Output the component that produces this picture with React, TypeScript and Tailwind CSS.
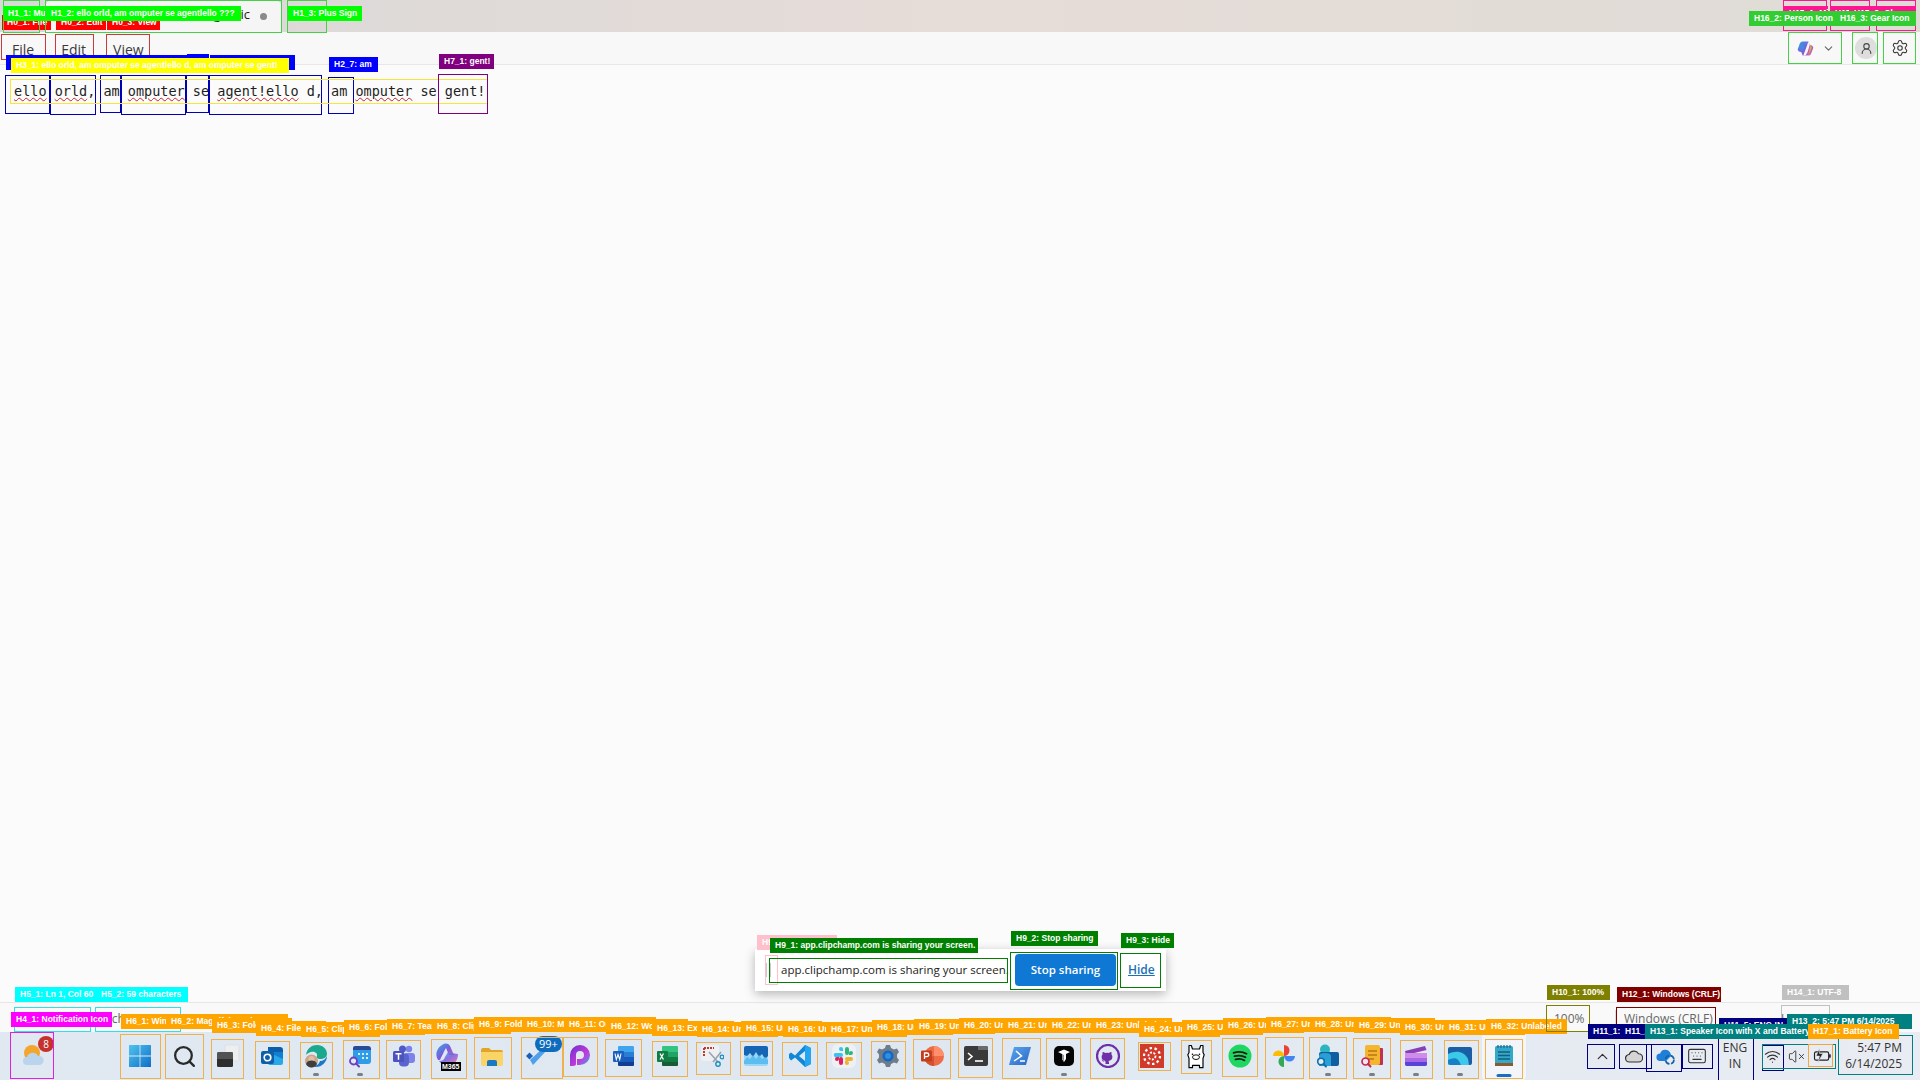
import type { ReactNode } from "react";
import { ChevronDown, ChevronUp, Settings, UserRound, Wifi, VolumeX, Keyboard, Search } from "lucide-react";

type Note =
  | { k: "box"; x: number; y: number; w: number; h: number; c: string }
  | { k: "tag"; x: number; y: number; t: string; c: string; w?: number };

const box = (x: number, y: number, r: number, b: number, c: string): Note => ({ k: "box", x, y, w: r - x, h: b - y, c });
const tag = (x: number, y: number, t: string, c: string, w?: number): Note => ({ k: "tag", x, y, t, c, w });

const ORANGE = "#ffa500";
const ORANGE_BOX = "#f2b04a";
const NAVY = "#000080";
const BLUE = "#0000ff";
const BLUE_BOX = "#0000b4";
const TEAL = "#008080";
const GREEN = "#00ff00";
const GREEN_BOX = "#45d045";
const LIME = "#32cd32";
const DGREEN = "#008000";
const PINK = "#ff1493";

// left, top, right, bottom of each taskbar box + where its tag sits
const taskBoxes: [number, number, number, number, number, number, string, number?][] = [
  [120, 1034, 161, 1079, 121, 1014, "Windows Icon"],
  [165, 1034, 204, 1079, 166, 1014, "Magnifying Glass Icon", 122],
  [211, 1039, 244, 1079, 212, 1018, "Folder Icon", 80],
  [255, 1041, 290, 1079, 256, 1021, "File Icon"],
  [300, 1042, 333, 1079, 301, 1022, "Clipchamp"],
  [343, 1040, 380, 1079, 344, 1020, "Folder Icon"],
  [386, 1040, 421, 1079, 387, 1019, "Teams Icon"],
  [431, 1039, 467, 1079, 432, 1019, "Clipchamp"],
  [474, 1037, 512, 1079, 474, 1017, "Folder Icon"],
  [521, 1037, 563, 1079, 522, 1017, "Messages"],
  [563, 1037, 598, 1077, 564, 1017, "Outlook Icon"],
  [605, 1039, 642, 1077, 606, 1019, "Word Icon"],
  [652, 1041, 688, 1077, 652, 1021, "Excel Icon"],
  [696, 1042, 731, 1075, 697, 1022, "Unlabeled"],
  [740, 1041, 773, 1076, 741, 1021, "Unlabeled"],
  [782, 1042, 818, 1076, 783, 1022, "Unlabeled"],
  [826, 1042, 862, 1079, 826, 1022, "Unlabeled"],
  [871, 1041, 906, 1079, 872, 1020, "Unlabeled"],
  [913, 1039, 951, 1079, 914, 1019, "Unlabeled"],
  [958, 1038, 993, 1078, 959, 1018, "Unlabeled"],
  [1002, 1038, 1041, 1079, 1003, 1018, "Unlabeled"],
  [1046, 1038, 1081, 1079, 1047, 1018, "Unlabeled"],
  [1090, 1038, 1125, 1079, 1091, 1018, "Unlabeled"],
  [1138, 1042, 1171, 1071, 1139, 1022, "Unlabeled"],
  [1181, 1040, 1212, 1074, 1182, 1020, "Unlabeled"],
  [1222, 1038, 1258, 1077, 1223, 1018, "Unlabeled"],
  [1265, 1037, 1304, 1079, 1266, 1017, "Unlabeled"],
  [1309, 1037, 1347, 1079, 1310, 1017, "Unlabeled"],
  [1353, 1038, 1391, 1079, 1354, 1018, "Unlabeled"],
  [1400, 1040, 1433, 1079, 1400, 1020, "Unlabeled"],
  [1444, 1040, 1479, 1079, 1444, 1020, "Unlabeled"],
  [1485, 1039, 1523, 1079, 1486, 1019, "Unlabeled"],
];

const notes: Note[] = [
  box(1, 34, 46, 60, "#c93a3a"),
  box(55, 34, 94, 60, "#c93a3a"),
  box(106, 34, 150, 60, "#c93a3a"),
  tag(2, 15, "H0_1: File", "#ff0000", 49),
  tag(56, 15, "H0_2: Edit", "#ff0000", 50),
  tag(107, 15, "H0_3: View", "#ff0000", 53),
  box(3, 0, 40, 33, GREEN_BOX),
  box(45, 0, 282, 33, GREEN_BOX),
  box(287, 0, 327, 33, GREEN_BOX),
  tag(3, 6, "H1_1: Music Note", GREEN, 42),
  tag(46, 6, "H1_2: ello orld, am omputer se agentlello ???", GREEN, 195),
  tag(288, 6, "H1_3: Plus Sign", GREEN, 74),
  box(5, 75, 50, 114, BLUE_BOX),
  box(50, 75, 96, 115, BLUE_BOX),
  box(100, 75, 121, 113, BLUE_BOX),
  box(121, 75, 186, 115, BLUE_BOX),
  box(186, 75, 209, 113, BLUE_BOX),
  box(209, 75, 322, 115, BLUE_BOX),
  box(328, 77, 354, 114, BLUE_BOX),
  tag(6, 55, "H2_1: ello", BLUE, 44),
  tag(50, 55, "H2_2: orld,", BLUE, 50),
  tag(100, 55, "H2_3: am", BLUE, 21),
  tag(121, 55, "H2_4: omputer", BLUE, 66),
  tag(187, 54, "H2_5: se", BLUE, 22),
  tag(210, 55, "H2_6: agent!ello", BLUE, 85),
  tag(329, 57, "H2_7: am", BLUE, 49),
  box(10, 79, 488, 104, "#f5e63c"),
  tag(11, 58, "H3_1: ello orld, am omputer se agentlello d, am omputer se gent!", "#ffff00", 278),
  box(438, 74, 488, 114, "#800080"),
  tag(439, 54, "H7_1: gent!", "#800080", 55),
  box(1783, 0, 1827, 31, PINK),
  box(1830, 0, 1870, 31, PINK),
  box(1876, 0, 1916, 31, PINK),
  tag(1784, 6, "H15_1: Minimize", PINK, 44),
  tag(1830, 6, "H15_2: Maximize", PINK, 40),
  tag(1849, 6, "H15_3: Close", PINK, 67),
  box(1788, 32, 1842, 64, GREEN_BOX),
  box(1852, 32, 1878, 64, GREEN_BOX),
  box(1883, 32, 1916, 64, GREEN_BOX),
  tag(1749, 11, "H16_2: Person Icon", LIME, 86),
  tag(1835, 11, "H16_3: Gear Icon", LIME, 81),
  box(14, 1007, 91, 1032, "#30e0e8"),
  box(95, 1007, 181, 1032, "#30e0e8"),
  tag(15, 987, "H5_1: Ln 1, Col 60", "#00ffff", 81),
  tag(96, 987, "H5_2: 59 characters", "#00ffff", 92),
  box(10, 1032, 54, 1079, "#e020e0"),
  tag(11, 1012, "H4_1: Notification Icon", "#ff00ff", 101),
  ...taskBoxes.map(([l, t, r, b]) => box(l, t, r, b, ORANGE_BOX)),
  ...taskBoxes.map(([, , , , x, y, t, w], i) => tag(x, y, `H6_${i + 1}: ${t}`, ORANGE, w)),
  box(1546, 1005, 1590, 1032, "#808000"),
  tag(1547, 985, "H10_1: 100%", "#808000", 63),
  box(1616, 1007, 1716, 1032, "#800000"),
  tag(1617, 987, "H12_1: Windows (CRLF)", "#800000", 104),
  box(1781, 1005, 1830, 1032, "#c0c0c0"),
  tag(1782, 985, "H14_1: UTF-8", "#c0c0c0", 67),
  box(1587, 1044, 1615, 1069, NAVY),
  box(1619, 1044, 1652, 1069, NAVY),
  box(1646, 1044, 1682, 1072, NAVY),
  box(1682, 1044, 1713, 1069, NAVY),
  box(1718, 1036, 1754, 1084, NAVY),
  box(1762, 1045, 1784, 1071, NAVY),
  tag(1588, 1024, "H11_1: Chevron", NAVY, 32),
  tag(1620, 1024, "H11_2: Cloud", NAVY, 32),
  tag(1719, 1018, "H11_5: ENG IN", NAVY, 72),
  box(1762, 1044, 1836, 1069, TEAL),
  box(1838, 1035, 1913, 1075, TEAL),
  tag(1787, 1014, "H13_2: 5:47 PM 6/14/2025", TEAL, 125),
  tag(1645, 1024, "H13_1: Speaker Icon with X and Battery", TEAL, 165),
  box(1808, 1044, 1833, 1067, "#f2a63c"),
  tag(1808, 1024, "H17_1: Battery Icon", ORANGE, 91),
  box(765, 955, 778, 985, "#ffc0cb"),
  tag(757, 935, "H9_0: Pause", "#ffc0cb", 80),
  box(769, 958, 1008, 983, DGREEN),
  box(1010, 952, 1118, 990, DGREEN),
  box(1120, 953, 1161, 988, DGREEN),
  tag(770, 938, "H9_1: app.clipchamp.com is sharing your screen.", DGREEN, 208),
  tag(1011, 931, "H9_2: Stop sharing", DGREEN, 87),
  tag(1121, 933, "H9_3: Hide", DGREEN, 53),
];

function Annotations() {
  return (
    <div className="absolute inset-0 pointer-events-none overflow-hidden z-20">
      {notes.map((n, i) =>
        n.k === "box" ? (
          <div
            key={i}
            className="absolute border-[1.5px]"
            style={{ left: n.x, top: n.y, width: n.w, height: n.h, borderColor: n.c }}
          />
        ) : (
          <div
            key={i}
            className="absolute h-[15px] overflow-hidden whitespace-nowrap px-[5px] text-[8.5px] font-bold leading-[15px] text-white font-['Liberation_Sans',sans-serif]"
            style={{ left: n.x, top: n.y, width: n.w, backgroundColor: n.c }}
          >
            {n.t}
          </div>
        ),
      )}
    </div>
  );
}

function Svg({ children, size = 24 }: { children: ReactNode; size?: number }) {
  return (
    <svg width={size} height={size} viewBox="0 0 24 24" aria-hidden="true">
      {children}
    </svg>
  );
}

function Dot({ blue }: { blue?: boolean }) {
  return blue ? (
    <span className="absolute bottom-[3px] left-1/2 h-[3px] w-[15px] -translate-x-1/2 rounded-full bg-[#1a6fc0]" />
  ) : (
    <span className="absolute bottom-[4px] left-1/2 h-[3px] w-[6px] -translate-x-1/2 rounded-full bg-[#7a7f85]" />
  );
}

function Slot({ children, dot, active }: { children: ReactNode; dot?: "grey" | "blue"; active?: boolean }) {
  return (
    <div className={`relative flex h-[48px] w-[44px] items-center justify-center ${active ? "rounded bg-[#f3f5f8]" : ""}`}>
      {children}
      {dot && <Dot blue={dot === "blue"} />}
    </div>
  );
}

const taskIcons: { el: ReactNode; dot?: "grey" | "blue"; active?: boolean }[] = [
  {
    el: (
      <Svg>
        <defs>
          <linearGradient id="win" x1="0" y1="0" x2="1" y2="1">
            <stop offset="0" stopColor="#4fc3f0" />
            <stop offset="1" stopColor="#0f6fc6" />
          </linearGradient>
        </defs>
        <path d="M1 1h10.6v10.6H1zM12.4 1H23v10.6H12.4zM1 12.4h10.6V23H1zM12.4 12.4H23V23H12.4z" fill="url(#win)" />
      </Svg>
    ),
  },
  { el: <Search size={25} strokeWidth={2.2} color="#2a2a2a" /> },
  {
    el: (
      <Svg>
        <rect x="9" y="1" width="14" height="16" rx="1.5" fill="#eceef0" stroke="#dde0e3" />
        <rect x="1" y="8" width="16" height="15" rx="1.5" fill="#2e2e2e" />
        <path d="M1 9.5A1.5 1.5 0 0 1 2.5 8H17v7H1z" fill="#6a6a6a" opacity="0.6" />
      </Svg>
    ),
  },
  {
    el: (
      <Svg>
        <path d="M8 3h12a3 3 0 0 1 3 3v2H8z" fill="#0d5ea8" />
        <path d="M8 8h15v11a2 2 0 0 1-2 2H10a2 2 0 0 1-2-2z" fill="#28a8ea" />
        <path d="M8 8l15 7v-7z" fill="#0f7fd0" />
        <rect x="1" y="7" width="13" height="13" rx="2" fill="#0f5fa8" />
        <circle cx="7.5" cy="13.5" r="3.3" fill="none" stroke="#fff" strokeWidth="1.6" />
      </Svg>
    ),
  },
  {
    el: (
      <Svg>
        <path d="M2 11C3 4 8 1 13 1c6 0 10 4 10 9 0 3-3 5-7 5-2 0-4-1-3-3 1-3-3-5-6-4-2 .6-4 1.5-5 3z" fill="#1aa88f" />
        <path d="M23 12c0 6-5 11-11 11-2 0-3-.4-4-1 5 0 7-2 8-5 3 0 6-2 7-5z" fill="#1d76c8" />
        <circle cx="7.5" cy="17" r="6.5" fill="#c9a58c" />
        <circle cx="7.5" cy="15" r="3" fill="#e3bea3" />
        <path d="M2 20c1-3 3-3.5 5.5-3.5S12 17 13 20c-1.2 2-3 3.5-5.5 3.5S3 22 2 20z" fill="#3d3d3d" />
      </Svg>
    ),
    dot: "grey",
  },
  {
    el: (
      <Svg>
        <path d="M7 2h13a3 3 0 0 1 3 3v1H5V4a2 2 0 0 1 2-2z" fill="#2a4a98" />
        <path d="M5 6h18v11a3 3 0 0 1-3 3H8a3 3 0 0 1-3-3z" fill="#2f9ce8" />
        <g fill="#fff">
          <circle cx="11" cy="10" r="1.1" />
          <circle cx="15" cy="10" r="1.1" />
          <circle cx="19" cy="10" r="1.1" />
          <circle cx="15" cy="14" r="1.1" />
          <circle cx="19" cy="14" r="1.1" />
        </g>
        <circle cx="5.5" cy="17" r="3.5" fill="#dfe6f2" stroke="#6b3fc0" strokeWidth="1.8" />
        <path d="M8 19.5l3 3" stroke="#6b3fc0" strokeWidth="2" strokeLinecap="round" />
      </Svg>
    ),
    dot: "grey",
  },
  {
    el: (
      <Svg>
        <circle cx="17" cy="5" r="3.2" fill="#7b83eb" />
        <rect x="12" y="9" width="11" height="10" rx="3" fill="#7b83eb" />
        <circle cx="10.5" cy="5" r="3.5" fill="#5059c9" />
        <rect x="7" y="9.5" width="10" height="13" rx="4" fill="#5b63cf" />
        <rect x="1" y="7" width="11" height="11" rx="1.5" fill="#4b53bc" />
        <path d="M3.5 9.7h6M6.5 9.7v6" stroke="#fff" strokeWidth="1.5" />
      </Svg>
    ),
  },
  {
    el: (
      <div className="relative h-[28px] w-[26px]">
        <Svg size={24}>
          <defs>
            <linearGradient id="m365" x1="0" y1="0" x2="1" y2="1">
              <stop offset="0" stopColor="#2bb3d9" />
              <stop offset="0.5" stopColor="#7a5ae0" />
              <stop offset="1" stopColor="#e56aa0" />
            </linearGradient>
          </defs>
          <path d="M7 3c3-2 6-2 8 1l4 9h-5L11 6C9 9 7 14 5 18H3C1 15 1 11 2 9c1-3 3-5 5-6z" fill="url(#m365)" />
          <path d="M10 22c-3 0-5-1-6-3 3 0 5-1 6-4l3-5 3 1 7 1c0 5-2 10-8 10z" fill="url(#m365)" opacity="0.85" />
        </Svg>
        <span className="absolute bottom-[-1px] left-[6px] bg-black px-[1px] text-[7px] font-bold leading-[9px] text-white font-['Liberation_Sans',sans-serif]">
          M365
        </span>
      </div>
    ),
  },
  {
    el: (
      <Svg>
        <path d="M1 6a2 2 0 0 1 2-2h6l2 2h10a2 2 0 0 1 2 2v2H1z" fill="#e2a52a" />
        <path d="M1 8h22v12a2 2 0 0 1-2 2H3a2 2 0 0 1-2-2z" fill="#fbd468" />
        <path d="M7 22v-4a2 2 0 0 1 2-2h6a2 2 0 0 1 2 2v4z" fill="#1b78c4" />
      </Svg>
    ),
  },
  {
    el: (
      <div className="relative">
        <Svg size={24}>
          <path d="M2 12l3.5-3.5 3.5 3.5-3.5 3.5z" fill="#1a5fb8" />
          <path d="M6 16L19 4l3 3L10 20l-1 1z" fill="#4f9fea" />
        </Svg>
        <span className="absolute left-[11px] top-[-8px] rounded-full bg-[#0f6cbd] px-[4px] text-[11px] leading-[16px] text-white font-['Open_Sans',sans-serif]">
          99+
        </span>
      </div>
    ),
  },
  {
    el: (
      <Svg>
        <defs>
          <linearGradient id="pp" x1="0" y1="0" x2="1" y2="1">
            <stop offset="0" stopColor="#6a2fd0" />
            <stop offset="0.6" stopColor="#c23bd8" />
            <stop offset="1" stopColor="#3aa8e8" />
          </linearGradient>
        </defs>
        <path d="M2 22V11A10 10 0 1 1 12 21H9v-6h3a4 4 0 1 0-4-4v9c0 1-1 2-3 2z" fill="url(#pp)" />
      </Svg>
    ),
  },
  {
    el: (
      <Svg>
        <path d="M7 2h14a2 2 0 0 1 1 1v5H6V3a1 1 0 0 1 1-1z" fill="#41a5ee" />
        <rect x="6" y="8" width="16" height="5" fill="#2b7cd3" />
        <rect x="6" y="13" width="16" height="5" fill="#185abd" />
        <path d="M6 18h16v3a1 1 0 0 1-1 1H7a1 1 0 0 1-1-1z" fill="#103f91" />
        <rect x="1" y="7" width="11" height="11" rx="1" fill="#1a5fc0" />
        <path d="M3 9.5l1.3 6 1.7-5 1.7 5 1.3-6" fill="none" stroke="#fff" strokeWidth="1.1" />
      </Svg>
    ),
  },
  {
    el: (
      <Svg>
        <path d="M7 2h14a1 1 0 0 1 1 1v5H6V3a1 1 0 0 1 1-1z" fill="#33c481" />
        <rect x="6" y="8" width="16" height="5" fill="#21a366" />
        <rect x="6" y="13" width="16" height="5" fill="#107c41" />
        <path d="M6 18h16v3a1 1 0 0 1-1 1H7a1 1 0 0 1-1-1z" fill="#185c37" />
        <rect x="1" y="7" width="11" height="11" rx="1" fill="#107c41" />
        <path d="M4 9.5l3.5 6M7.5 9.5l-3.5 6" stroke="#fff" strokeWidth="1.3" />
      </Svg>
    ),
  },
  {
    el: (
      <Svg>
        <rect x="1" y="1" width="18" height="16" rx="3" fill="#eef0f3" />
        <path d="M4 4h10M4 4v8" stroke="#c0392b" strokeWidth="2" strokeDasharray="2 1" />
        <path d="M9 8l9 10M21 8l-8 10" stroke="#9aa3ad" strokeWidth="1.6" />
        <circle cx="18" cy="20" r="2.2" fill="none" stroke="#1c8fbf" strokeWidth="1.4" />
        <circle cx="22" cy="13" r="1.8" fill="none" stroke="#1c8fbf" strokeWidth="1.3" />
      </Svg>
    ),
  },
  {
    el: (
      <Svg>
        <rect x="0" y="2" width="24" height="20" rx="2" fill="#9bd7f5" />
        <path d="M0 4a2 2 0 0 1 2-2h20a2 2 0 0 1 2 2v8l-3 3-3-5-3 3-3-5-3 5-3-4-3 3-3-1z" fill="#1565b4" />
        <path d="M0 17l3-4 3 2 3-4 3 4 3-4 3 4 3-2 3 3v4H0z" fill="#5dbdf0" />
      </Svg>
    ),
  },
  {
    el: (
      <Svg>
        <path d="M17 1l6 3v16l-6 3-10-9.5-4 3L1 14v-4l2-1.5 4 3zm0 6l-6 5 6 5z" fill="#1187d8" />
        <path d="M17 1l6 3v16l-6 3z" fill="#25a4ef" />
      </Svg>
    ),
  },
  {
    el: (
      <Svg>
        <rect x="0" y="0" width="24" height="24" rx="6" fill="#eef0f4" />
        <path d="M9 3a2 2 0 0 1 2 2v2H9a2 2 0 0 1 0-4zM3 9h6a2 2 0 0 1 0 4H5a2 2 0 0 1-2-4z" fill="#36c5f0" />
        <path d="M21 9a2 2 0 0 1-2 2h-2V9a2 2 0 0 1 4 0zM15 3a2 2 0 0 1 2 2v4a2 2 0 0 1-4 0V5a2 2 0 0 1 2-2z" fill="#2eb67d" />
        <path d="M15 21a2 2 0 0 1-2-2v-2h2a2 2 0 0 1 0 4zM21 15a2 2 0 0 1-2 2h-4a2 2 0 0 1 0-4h4a2 2 0 0 1 2 2z" fill="#ecb22e" />
        <path d="M3 15a2 2 0 0 1 2-2h2v2a2 2 0 0 1-4 0zM9 21a2 2 0 0 1-2-2v-4a2 2 0 0 1 4 0v4a2 2 0 0 1-2 2z" fill="#e01e5a" />
      </Svg>
    ),
  },
  {
    el: (
      <Svg>
        <path d="M10 1h4l1 3 3 1.5 3-1 2 3.5-2 2.5v3l2 2.5-2 3.5-3-1L15 20l-1 3h-4l-1-3-3-1.5-3 1-2-3.5 2-2.5v-3L1 8l2-3.5 3 1L9 4z" fill="#6f7c8a" />
        <circle cx="12" cy="12" r="5.5" fill="#1268c4" />
        <circle cx="12" cy="12" r="3" fill="#2f8fe0" />
      </Svg>
    ),
  },
  {
    el: (
      <Svg>
        <circle cx="14" cy="12" r="10" fill="#ed6c47" />
        <path d="M14 2A10 10 0 0 1 24 12H14z" fill="#ff8f6b" />
        <path d="M14 12v10A10 10 0 0 1 4 14z" fill="#d35230" />
        <rect x="1" y="6.5" width="11" height="11" rx="1" fill="#c43e1c" />
        <path d="M4.5 15V9H7a1.8 1.8 0 0 1 0 3.6H4.5" fill="none" stroke="#fff" strokeWidth="1.3" />
      </Svg>
    ),
  },
  {
    el: (
      <Svg>
        <rect x="0" y="2" width="24" height="20" rx="2" fill="#3a3a3a" />
        <path d="M14 2h8a2 2 0 0 1 2 2v2H14z" fill="#6b6b6b" />
        <path d="M4 9l4 3.5L4 16" fill="none" stroke="#fff" strokeWidth="1.6" />
        <path d="M11 17h8" stroke="#fff" strokeWidth="1.6" />
      </Svg>
    ),
  },
  {
    el: (
      <Svg>
        <defs>
          <linearGradient id="psh" x1="0" y1="0" x2="1" y2="1">
            <stop offset="0" stopColor="#5ba7f0" />
            <stop offset="1" stopColor="#2a66c4" />
          </linearGradient>
        </defs>
        <path d="M6 3h17l-5 18H1z" fill="url(#psh)" />
        <path d="M8 7l5.5 5L6 17M12 17h5" fill="none" stroke="#fff" strokeWidth="1.5" />
      </Svg>
    ),
  },
  {
    el: (
      <Svg>
        <rect x="2" y="2" width="20" height="20" rx="5" fill="#050505" />
        <path d="M6 8l6-2.5L18 8l-4 2v5l-2 3-2-3v-5z" fill="#fff" />
        <path d="M12 11v7l-2-3v-5z" fill="#9a9a9a" />
      </Svg>
    ),
    dot: "grey",
  },
  {
    el: (
      <Svg>
        <circle cx="12" cy="12" r="11" fill="none" stroke="#6f2fa8" strokeWidth="2.2" />
        <path d="M9.5 20v-2.5c-3 .6-3.6-1.2-4-2 1 .2 1.7 1 2.2 1.5.8.8 1.8.3 1.9 0-2.5-.4-4-1.8-4-4.3 0-1 .4-1.8 1-2.5-.2-.7-.2-1.5.1-2.2 1 0 1.8.5 2.4 1a7 7 0 0 1 3.8 0c.6-.5 1.4-1 2.4-1 .3.7.3 1.5.1 2.2.6.7 1 1.5 1 2.5 0 2.5-1.5 3.9-4 4.3.5.5.6 1 .6 1.6V20z" fill="#6f2fa8" />
      </Svg>
    ),
  },
  {
    el: (
      <Svg>
        <rect x="0" y="0" width="24" height="24" fill="#d03a2b" />
        <circle cx="12" cy="12" r="3.5" fill="none" stroke="#fff" strokeWidth="1.8" strokeDasharray="2 1.5" />
        <circle cx="12" cy="12" r="8" fill="none" stroke="#fff" strokeWidth="2.2" strokeDasharray="2.5 2.5" />
      </Svg>
    ),
  },
  {
    el: (
      <Svg size={28}>
        <path d="M6 22V14L5 11l1-2V3h2l1 3h6l1-3h2v6l1 2-1 3v8h-3v-2H9v2z" fill="#fff" stroke="#000" strokeWidth="1" strokeLinejoin="round" />
        <ellipse cx="12" cy="13" rx="3" ry="2" fill="none" stroke="#000" strokeWidth="0.8" />
        <circle cx="9" cy="10.5" r="0.7" />
        <circle cx="15" cy="10.5" r="0.7" />
      </Svg>
    ),
  },
  {
    el: (
      <Svg>
        <circle cx="12" cy="12" r="11.5" fill="#1ed760" />
        <path d="M5.5 8.8c4.5-1.3 9.5-1 13 1M6.5 12.2c4-1 8-.7 11 1.1M7.5 15.4c3-.8 6.5-.5 9 1" fill="none" stroke="#1a1a1a" strokeWidth="1.8" strokeLinecap="round" />
      </Svg>
    ),
  },
  {
    el: (
      <Svg>
        <path d="M1 12a5.5 5.5 0 0 1 11 0z" fill="#fbbc04" />
        <path d="M12 1a5.5 5.5 0 0 1 0 11z" fill="#ea4335" />
        <path d="M23 12a5.5 5.5 0 0 1-11 0z" fill="#4285f4" />
        <path d="M12 23a5.5 5.5 0 0 1 0-11z" fill="#34a853" />
      </Svg>
    ),
  },
  {
    el: (
      <Svg>
        <circle cx="9" cy="5.5" r="5" fill="#2cb5c0" />
        <rect x="3" y="8" width="20" height="14" rx="2" fill="#0f5fa0" />
        <path d="M3 12c0-2 2-3 6-3s6 1 6 3v10H5a2 2 0 0 1-2-2z" fill="#2a9fd6" />
        <circle cx="5" cy="17.5" r="3.3" fill="#e4eef6" stroke="#0f6fa8" strokeWidth="1.6" />
        <path d="M7.5 20l2.5 2.5" stroke="#0f6fa8" strokeWidth="2" strokeLinecap="round" />
      </Svg>
    ),
    dot: "grey",
  },
  {
    el: (
      <Svg>
        <rect x="16" y="4" width="7" height="17" rx="1" fill="#c0334d" />
        <rect x="5" y="1" width="15" height="20" rx="2" fill="#f5b52e" />
        <path d="M8 7h9M8 11h9M8 15h6" stroke="#b87514" strokeWidth="1.3" />
        <circle cx="5.5" cy="17.5" r="3.5" fill="#f7e3e8" stroke="#c0285a" strokeWidth="1.7" />
        <path d="M8 20l2.5 2.5" stroke="#c0285a" strokeWidth="2" strokeLinecap="round" />
      </Svg>
    ),
    dot: "grey",
  },
  {
    el: (
      <Svg>
        <path d="M1 7l20-5 1.5 4L2 11z" fill="#8a3fb5" />
        <rect x="1" y="9" width="22" height="13" rx="2" fill="#a868e8" />
        <path d="M1 9h22v5H1z" fill="#d08ce8" />
        <path d="M1 18h22v2a2 2 0 0 1-2 2H3a2 2 0 0 1-2-2z" fill="#5a44d8" />
      </Svg>
    ),
    dot: "grey",
  },
  {
    el: (
      <Svg>
        <rect x="0" y="3" width="24" height="18" rx="2" fill="#1a5fa6" />
        <path d="M0 10c8-4 16-3 20 5l1 6H3a3 3 0 0 1-3-3z" fill="#3cc8e8" />
        <path d="M0 16c6-3 10-3 13 5H3a3 3 0 0 1-3-3z" fill="#1580c4" />
      </Svg>
    ),
    dot: "grey",
  },
  {
    el: (
      <Svg>
        <rect x="3" y="2" width="18" height="18" rx="1.5" fill="#35a7c8" />
        <rect x="3" y="19" width="18" height="3" fill="#8a5a30" />
        <path d="M6 1v3M9 1v3M12 1v3M15 1v3M18 1v3" stroke="#166a8a" strokeWidth="1.2" />
        <path d="M6 8h12M6 11.5h12M6 15h12" stroke="#12607e" strokeWidth="1.4" />
      </Svg>
    ),
    dot: "blue",
    active: true,
  },
];

function Copilot() {
  return (
    <Svg size={17}>
      <defs>
        <linearGradient id="cop" x1="0" y1="0" x2="1" y2="1">
          <stop offset="0" stopColor="#2aa9d8" />
          <stop offset="0.5" stopColor="#7b5ae0" />
          <stop offset="1" stopColor="#e56a9f" />
        </linearGradient>
      </defs>
      <path d="M8 2h8l2 5c3 0 5 2 5 4l-3 8c-1 2-2 3-4 3H8l-2-5c-3 0-5-2-5-4l3-8c1-2 2-3 4-3z" fill="url(#cop)" />
      <path d="M16 2l2 5-3 10-3 5H9l5-14z" fill="#f5f5f5" />
      <path d="M4 6l3 1 4 3-3 6-3-1z" fill="#2f9be0" opacity="0.6" />
      <path d="M19 6l2 5-5 11 1-6z" fill="#f0a040" />
    </Svg>
  );
}

const wavy = "underline decoration-wavy decoration-[#c8232c] decoration-1";

export default function App() {
  return (
    <div className="relative flex h-[1080px] w-[1920px] flex-col overflow-hidden bg-[#fbfbfb] font-['Open_Sans',sans-serif] text-[#333]">
      {/* Tab strip */}
      <div className="flex h-[32px] shrink-0 bg-gradient-to-r from-[#d8d8d8] via-[#e6dcd8] to-[#dfdcd6] pl-[3px]">
        <div className="w-[37px]" />
        <div className="ml-[5px] flex w-[237px] items-center justify-between rounded-t-lg bg-[#f5f5f5] pl-[10px] pr-[15px] text-[13px] text-[#222]">
          <span className="flex w-[195px] justify-end overflow-hidden whitespace-nowrap pb-[3px]">ello orld, am omputer se agentic</span>
          <span className="h-[7px] w-[7px] rounded-full bg-[#8a8a8a]" />
        </div>
      </div>

      {/* Menu bar */}
      <div className="flex h-[33px] shrink-0 items-center border-b border-[#e8e8e8] bg-[#f8f8f8] pl-[12px] pr-[7px] text-[14px] text-[#3a3a3a]">
        <div className="flex gap-[27px] pt-[2px]">
          <span>File</span>
          <span>Edit</span>
          <span>View</span>
        </div>
        <div className="ml-auto flex items-center">
          <div className="flex w-[54px] items-center justify-center gap-[8px]">
            <Copilot />
            <ChevronDown size={13} color="#666" />
          </div>
          <div className="ml-[12px] flex h-[22px] w-[22px] items-center justify-center rounded-full bg-[#dedede]">
            <UserRound size={13} color="#444" />
          </div>
          <div className="ml-[10px] flex w-[26px] items-center justify-center">
            <Settings size={18} color="#333" strokeWidth={1.4} />
          </div>
        </div>
      </div>

      {/* Editor */}
      <div className="flex-1 pl-[14px] pt-[16px] text-[13.5px] leading-[20px] text-[#1e1e1e] font-['DejaVu_Sans_Mono',monospace] whitespace-pre">
        <span className={wavy}>ello</span> <span className={wavy}>orld</span>, am <span className={wavy}>omputer</span> se{" "}
        <span className={wavy}>agent!ello</span> d, am <span className={wavy}>omputer</span> se gent!
      </div>

      {/* Status bar */}
      <div className="flex h-[30px] shrink-0 items-center border-t border-[#e6e6e6] bg-[#f9f9f9] pt-[3px] text-[12px] text-[#666]">
        <span className="ml-[20px] w-[75px]">Ln 1, Col 60</span>
        <span className="w-[100px]">59 characters</span>
        <span className="ml-auto w-[61px]">100%</span>
        <span className="w-[166px] border-l border-[#ddd] pl-[8px]">Windows (CRLF)</span>
        <span className="mr-[79px] w-[60px]">UTF-8</span>
      </div>

      {/* Taskbar */}
      <div className="flex h-[48px] shrink-0 items-center bg-gradient-to-r from-[#e0e9f2] via-[#dfe8f1] to-[#e9ecf2]">
        <div className="flex w-[118px] pl-[21px]">
          <div className="relative h-[26px] w-[26px]">
            <Svg size={24}>
              <circle cx="11" cy="10" r="8" fill="#f4a62a" />
              <path d="M6 22a4 4 0 0 1 0-8 6 6 0 0 1 11-1 4.5 4.5 0 0 1 2 9z" fill="#b9d4ec" />
            </Svg>
            <span className="absolute right-[-7px] top-[-7px] flex h-[16px] w-[16px] items-center justify-center rounded-full bg-[#c4322b] text-[10px] text-white">
              8
            </span>
          </div>
        </div>
        {taskIcons.map((t, i) => (
          <Slot key={i} dot={t.dot} active={t.active}>
            {t.el}
          </Slot>
        ))}
        <div className="ml-auto flex items-center text-[#333]">
          <div className="flex w-[32px] justify-center">
            <ChevronUp size={17} strokeWidth={1.8} />
          </div>
          <div className="flex w-[32px] justify-center">
            <Svg size={18}>
              <path d="M6 20a5 5 0 0 1-.5-10A7 7 0 0 1 18 9a5.5 5.5 0 0 1 0 11z" fill="#d5d5d5" stroke="#333" strokeWidth="1.6" />
            </Svg>
          </div>
          <div className="flex w-[31px] justify-center">
            <Svg size={20}>
              <path d="M5 18a4.5 4.5 0 0 1 0-9 6.5 6.5 0 0 1 12-1 5 5 0 0 1 1 4l-6 6z" fill="#1f7fd8" />
              <circle cx="16.5" cy="16.5" r="5" fill="none" stroke="#1560a8" strokeWidth="2" strokeDasharray="6 2" />
            </Svg>
          </div>
          <div className="flex w-[31px] justify-center">
            <Keyboard size={20} strokeWidth={1.3} />
          </div>
          <div className="ml-[5px] flex w-[36px] flex-col items-center text-[12px] leading-[16px]">
            <span>ENG</span>
            <span>IN</span>
          </div>
          <div className="ml-[8px] flex w-[22px] justify-center">
            <Wifi size={17} strokeWidth={1.6} />
          </div>
          <div className="ml-[1px] flex w-[24px] justify-center">
            <VolumeX size={17} strokeWidth={1.3} />
          </div>
          <div className="ml-[1px] flex w-[25px] justify-center">
            <Svg size={20}>
              <rect x="3" y="7" width="17" height="10" rx="2" fill="none" stroke="#222" strokeWidth="1.4" />
              <rect x="20.5" y="10" width="2" height="4" fill="#222" />
              <path d="M9 3l-4 9h4l-2 8 6-11H9z" fill="#222" stroke="#e6ebf1" strokeWidth="0.6" />
            </Svg>
          </div>
          <div className="ml-[8px] mr-[18px] flex w-[60px] flex-col items-end text-[12px] leading-[16px]">
            <span>5:47 PM</span>
            <span>6/14/2025</span>
          </div>
        </div>
      </div>

      {/* Screen sharing bar */}
      <div className="absolute left-[755px] top-[949px] z-10 flex h-[42px] w-[411px] items-center bg-white pl-[10px] text-[11.5px] text-[#222] shadow-[0_3px_10px_rgba(0,0,0,0.28)]">
        <span className="h-[14px] w-[6px] border-x-2 border-[#c8c8c8]" />
        <span className="ml-[10px] w-[229px] whitespace-nowrap">app.clipchamp.com is sharing your screen.</span>
        <button className="ml-[5px] h-[32px] w-[101px] rounded-[4px] bg-[#0f78d4] text-[11.5px] font-semibold text-white">
          Stop sharing
        </button>
        <span className="ml-[12px] text-[12px] font-semibold text-[#1a6fb5] underline">Hide</span>
      </div>

      <Annotations />
    </div>
  );
}
